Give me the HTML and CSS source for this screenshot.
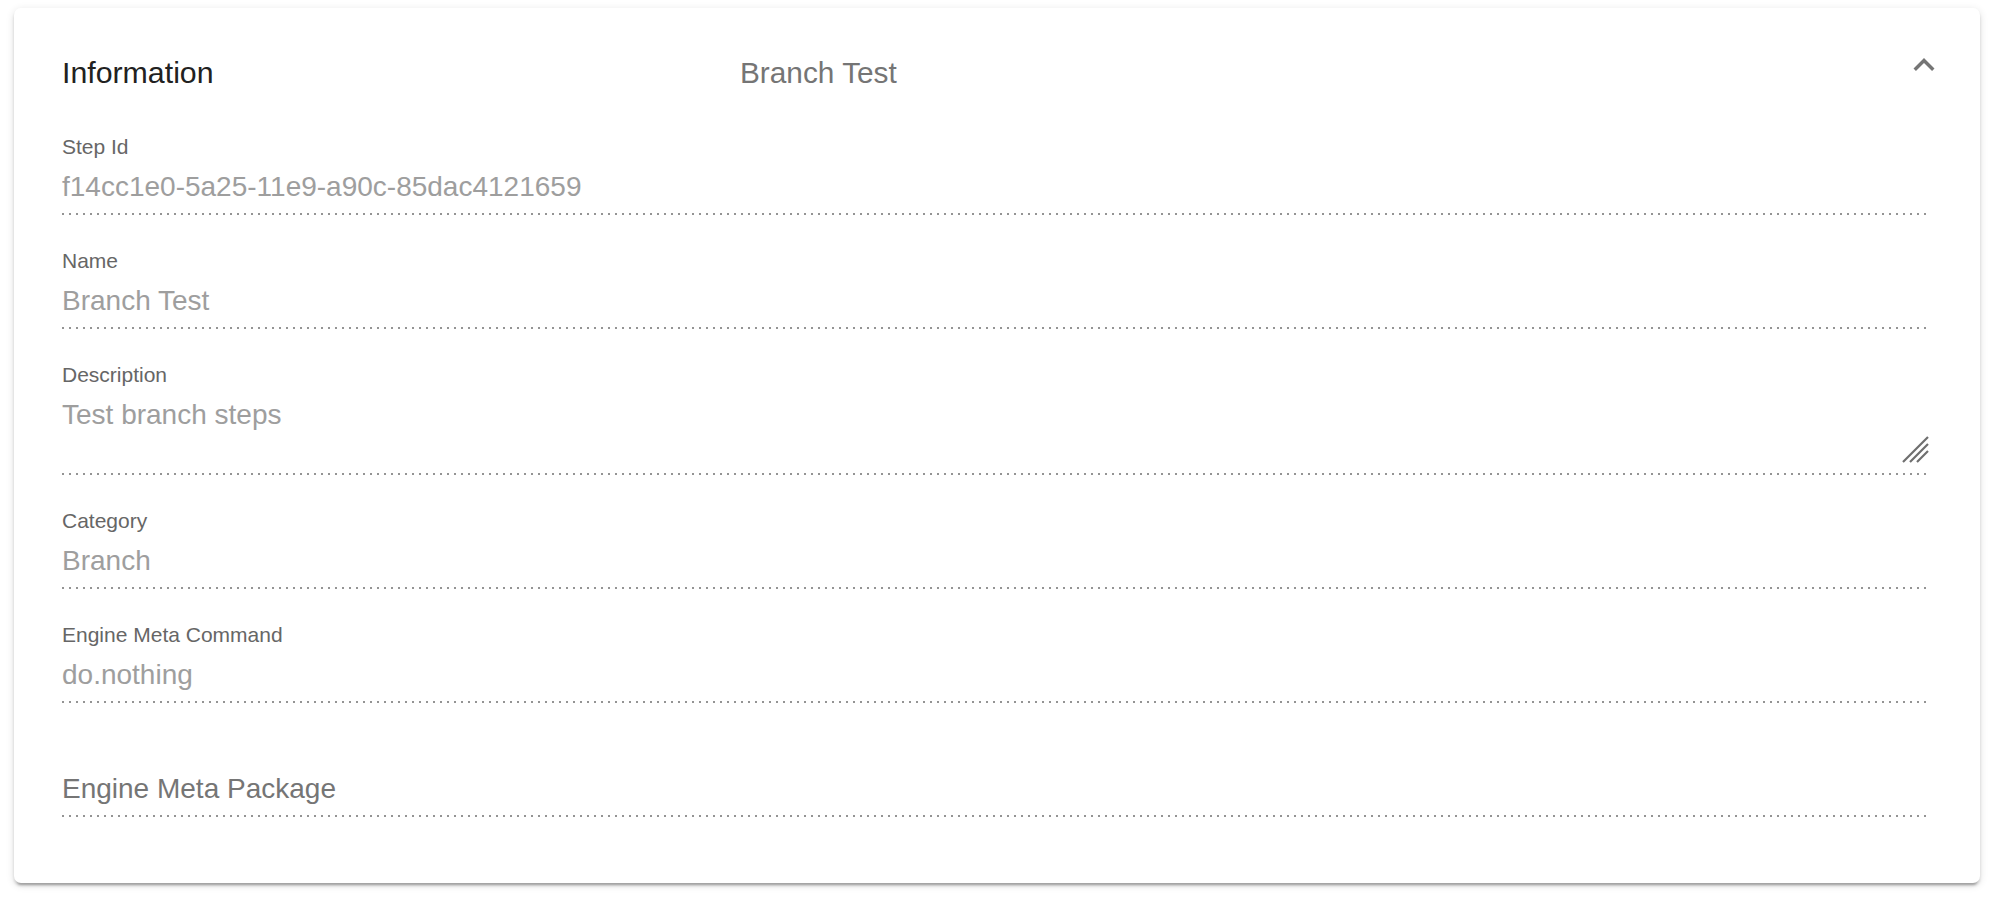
FILE: index.html
```html
<!DOCTYPE html>
<html lang="en">
<head>
<meta charset="utf-8">
<title>Information</title>
<link rel="stylesheet" href="styles.css">
</head>
<body>
<div class="card">
  <div class="header">
    <div class="title">Information</div>
    <div class="desc">Branch Test</div>
    <svg class="chevron" viewBox="0 0 24 24" width="42" height="42" aria-hidden="true">
      <path d="M12 8l-6 6 1.41 1.41L12 10.83l4.59 4.58L18 14z" fill="#757575"/>
    </svg>
  </div>
  <div class="fields">
    <div class="field">
      <div class="label">Step Id</div>
      <div class="value">f14cc1e0-5a25-11e9-a90c-85dac4121659</div>
      <div class="underline"></div>
    </div>
    <div class="field">
      <div class="label">Name</div>
      <div class="value">Branch Test</div>
      <div class="underline"></div>
    </div>
    <div class="field">
      <div class="label">Description</div>
      <div class="value textarea">Test branch steps
        <svg class="resizer" viewBox="0 0 28 28" width="28" height="28" aria-hidden="true">
          <path d="M2 27 L27 2 M9 27 L27 9 M16 27 L27 16" stroke="#6f6f6f" stroke-width="2.2" fill="none"/>
        </svg>
      </div>
      <div class="underline"></div>
    </div>
    <div class="field">
      <div class="label">Category</div>
      <div class="value">Branch</div>
      <div class="underline"></div>
    </div>
    <div class="field">
      <div class="label">Engine Meta Command</div>
      <div class="value">do.nothing</div>
      <div class="underline"></div>
    </div>
    <div class="field">
      <div class="label"></div>
      <div class="value placeholder">Engine Meta Package</div>
      <div class="underline"></div>
    </div>
  </div>
</div>
</body>
</html>
```
FILE: styles.css
```css
html, body {
  margin: 0;
  padding: 0;
  background: #ffffff;
}
body {
  font-family: "Liberation Sans", Arial, Helvetica, sans-serif;
  padding: 8px 10px 15px 14px;
}
.card {
  background: #ffffff;
  border-radius: 7px;
  box-shadow: 0 5px 2px -3px rgba(0,0,0,.2), 0 3px 3px 0 rgba(0,0,0,.14), 0 2px 9px 0 rgba(0,0,0,.12);
  padding: 36px 51px 66px 48px;
}
.header {
  display: flex;
  align-items: flex-start;
  height: 47px;
}
.title {
  flex: 0 0 678px;
  font-size: 30.3px;
  line-height: 36px;
  padding-top: 11px;
  color: #212121;
}
.desc {
  flex: 1 1 auto;
  font-size: 29.8px;
  line-height: 36px;
  padding-top: 11px;
  color: #757575;
}
.chevron {
  flex: 0 0 auto;
  margin-right: -16px;
}
.fields {
  display: flex;
  flex-direction: column;
  gap: 34px;
  margin-top: 44px;
}
.field {
  display: flex;
  flex-direction: column;
}
.label {
  font-size: 21px;
  line-height: 24px;
  height: 24px;
  color: #666666;
  margin-bottom: 12px;
}
.value {
  font-size: 28px;
  line-height: 32px;
  height: 32px;
  color: #9e9e9e;
  margin-bottom: 10px;
  white-space: nowrap;
}
.value.textarea {
  position: relative;
  height: 64px;
}
.value.placeholder {
  color: #757575;
}
.resizer {
  position: absolute;
  right: 0;
  bottom: 0;
}
.underline {
  height: 2px;
  background-image: linear-gradient(to right, rgba(0,0,0,.42) 0, rgba(0,0,0,.42) 2.4px, transparent 2.4px);
  background-size: 7px 2px;
  background-repeat: repeat-x;
}
```
